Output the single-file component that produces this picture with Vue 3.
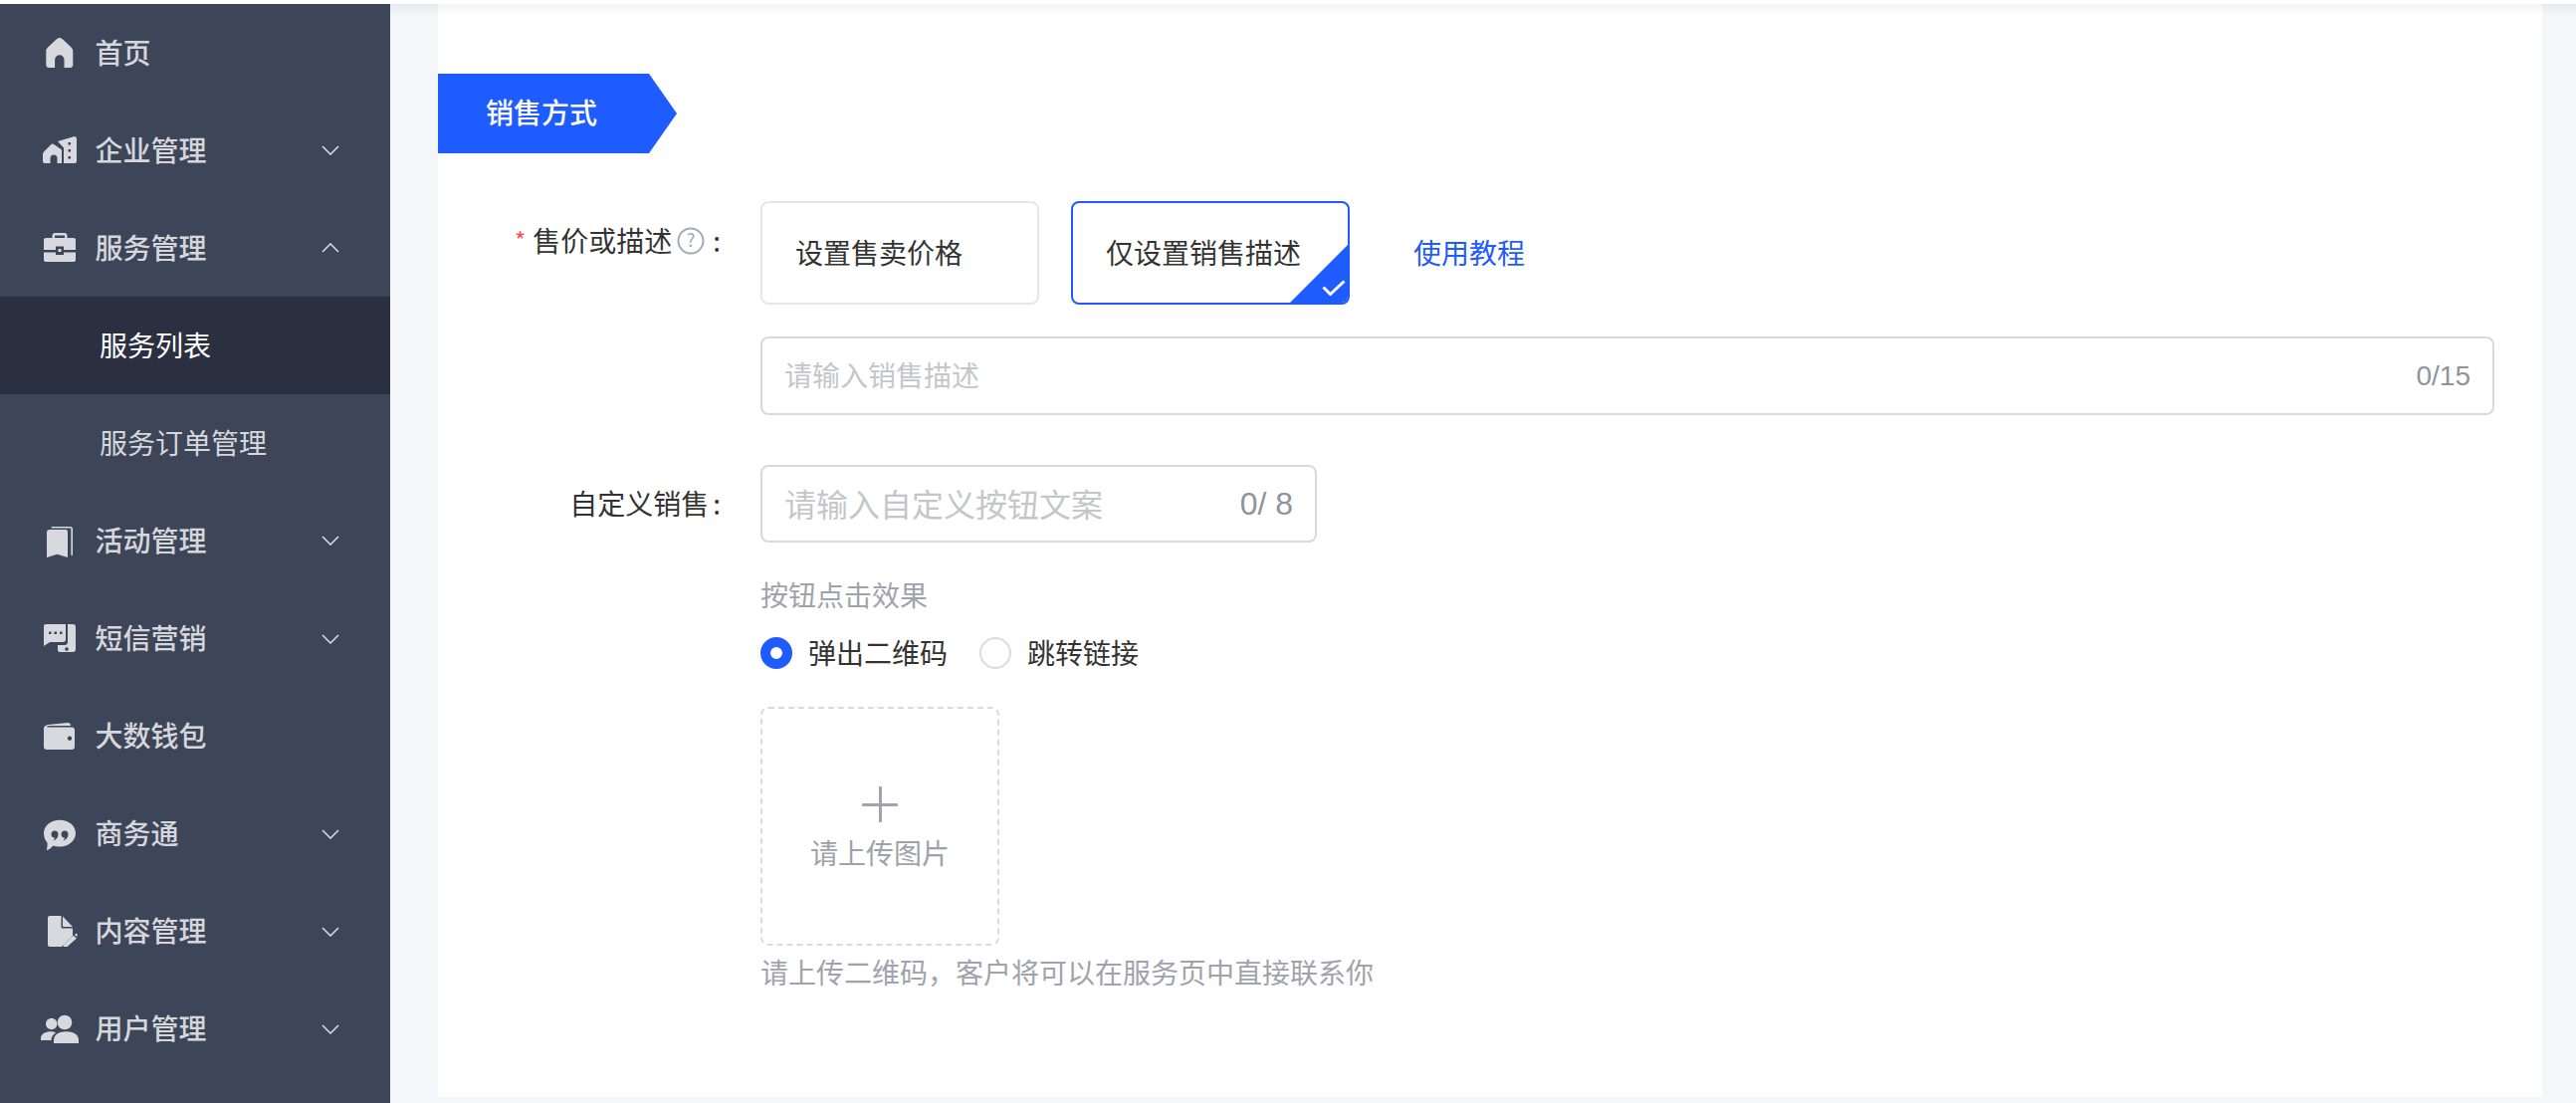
<script setup>
const menu = [
  { label: '首页', icon: 'home' },
  { label: '企业管理', icon: 'building', arrow: 'down' },
  { label: '服务管理', icon: 'case', arrow: 'up' },
  { label: '服务列表', sub: true, active: true },
  { label: '服务订单管理', sub: true },
  { label: '活动管理', icon: 'book', arrow: 'down' },
  { label: '短信营销', icon: 'sms', arrow: 'down' },
  { label: '大数钱包', icon: 'wallet' },
  { label: '商务通', icon: 'chat', arrow: 'down' },
  { label: '内容管理', icon: 'doc', arrow: 'down' },
  { label: '用户管理', icon: 'users', arrow: 'down' }
]
</script>

<template>
  <div class="page">
    <aside class="sidebar">
      <div
        v-for="item in menu"
        :key="item.label"
        class="row"
        :class="{ sub: item.sub, active: item.active }"
      >
        <svg v-if="item.icon" class="icon" viewBox="0 0 40 40">
          <path v-if="item.icon === 'home'" d="M19.800 5C21 5 22 5.700 23 6.500L31.500 14.500C32.700 15.800 33.300 16.800 33.300 18.500V32a3 3 0 0 1-3 3H24.500V27a4.700 4.700 0 0 0-9.400 0V35H9.300a3 3 0 0 1-3-3V18.500C6.300 16.800 6.900 15.800 8.100 14.500L16.600 6.500C17.600 5.700 18.600 5 19.800 5Z" />
          <g v-else-if="item.icon === 'building'">
            <path d="M3 24C3 22 4 21.500 5 20.500L11 14.500a2.500 2.500 0 0 1 3.500-.2L22 19.500V33H17.500V28a3.500 3.500 0 0 0-7 0V33H5a2 2 0 0 1-2-2Z" />
            <path fill-rule="evenodd" d="M18 11L34 6.200a2.200 2.200 0 0 1 3 2V31a2 2 0 0 1-2 2H24V17.500ZM28.500 12v2.500H31V12ZM28.500 19v2.500H31V19ZM28.500 26v2.500H31V26Z" />
          </g>
          <g v-else-if="item.icon === 'case'">
            <path d="M12.500 10V8a3 3 0 0 1 3-3H24.500a3 3 0 0 1 3 3V10H25V7.500H15V10Z" />
            <path d="M6 10H34a2 2 0 0 1 2 2V22H24V18.500H16V22H4V12a2 2 0 0 1 2-2Z" />
            <path d="M4 24.500H16V27H24V24.500H36V32a2 2 0 0 1-2 2H6a2 2 0 0 1-2-2Z" />
            <path d="M18.500 21h3v3h-3z" />
          </g>
          <g v-else-if="item.icon === 'book'">
            <path d="M7 11a3 3 0 0 1 3-3H26a2 2 0 0 1 2 2V36L17.500 32.800L7 36Z" />
            <path class="line" d="M11.700 5.800H30.500a1.700 1.700 0 0 1 1.700 1.700V33.700" />
          </g>
          <g v-else-if="item.icon === 'sms'">
            <path fill-rule="evenodd" d="M4 7a2 2 0 0 1 2-2H26V20a3 3 0 0 1-3 3H10L4 27ZM9 12.500v2.500h2.500v-2.500ZM14.500 12.500v2.500h2.500v-2.500ZM20 12.500v2.500h2.500v-2.500Z" />
            <path fill-rule="evenodd" d="M28 5H33a3 3 0 0 1 3 3V30a3 3 0 0 1-3 3H20a2 2 0 0 1-2-2V26H25a3 3 0 0 0 3-3ZM27 28.200a1.800 1.800 0 1 0 .01 0Z" />
          </g>
          <path v-else-if="item.icon === 'wallet'" fill-rule="evenodd" d="M4 12C4 9.500 5 9 8 8L28 6a3 3 0 0 1 3 3H10C8 9 7 10 7 10.500H32a3 3 0 0 1 3 3V30a3 3 0 0 1-3 3H7a3 3 0 0 1-3-3ZM30 19.500a2.200 2.200 0 1 0 .01 0Z" />
          <path v-else-if="item.icon === 'chat'" fill-rule="evenodd" d="M20 5.700C29 5.700 36 11.300 36 19C36 26.500 29 32.500 20 32.500C17.500 32.500 15.500 32.200 13.500 31.500C11.500 33.800 9.500 35.500 6.700 36C7.500 33.500 7.700 31 7.500 28.500C5.200 26 4 22.500 4 19C4 11.300 11 5.700 20 5.700ZM15 16.500a3.500 3.500 0 0 1 3.500 3.500c0 3-2 5.500-5 6.500c1-1.500 1.500-2.500 1.500-3a3.500 3.500 0 0 1 0-7ZM25 16.500a3.500 3.500 0 0 1 3.500 3.500c0 3-2 5.500-5 6.500c1-1.500 1.500-2.500 1.500-3a3.500 3.500 0 0 1 0-7Z" />
          <g v-else-if="item.icon === 'doc'">
            <path d="M8 6a2 2 0 0 1 2-2H21.500V15a1.500 1.500 0 0 0 1.500 1.500H33V24L22 35H10a2 2 0 0 1-2-2Z" />
            <path d="M23 4.500L33 15H24a1 1 0 0 1-1-1Z" />
            <path d="M24 35L23.500 33.500L33.500 23.800L37 26.500L27.500 35ZM35 23l1.500-1.500L38 23L37 25Z" />
          </g>
          <g v-else-if="item.icon === 'users'">
            <circle cx="25" cy="13" r="7.300" />
            <circle cx="11.700" cy="14.500" r="5.700" />
            <path d="M14 34V31C14 25.500 19 22.200 26.500 22.200C34 22.200 39 25.500 39 31V34Z" />
            <path d="M1 31V29C1 25 5.500 22.300 11 22.300C13 22.300 14.500 22.600 16 23.400C13 25.300 11.500 27.800 11.500 31Z" />
          </g>
        </svg>
        <span class="label">{{ item.label }}</span>
        <svg v-if="item.arrow" class="arrow" :class="{ up: item.arrow === 'up' }" viewBox="0 0 18 10">
          <path d="M1 1L9 9L17 1" />
        </svg>
      </div>
    </aside>

    <main class="main">
      <section class="card">
        <div class="tag">销售方式</div>

        <div class="form-row first">
          <div class="form-label top">
            <span class="star">*</span>
            <span class="form-text">售价或描述</span>
            <svg class="help" viewBox="0 0 28 28">
              <circle cx="14" cy="14" r="12.500" />
              <text x="14" y="20" text-anchor="middle">?</text>
            </svg>
            <span class="colon">:</span>
          </div>
          <div class="form-field">
            <div class="options">
              <div class="option"><span class="nudge">设置售卖价格</span></div>
              <div class="option selected">
                <span class="nudge">仅设置销售描述</span>
                <svg class="check" viewBox="0 0 24 16">
                  <path d="M1.500 7.500L8.500 14.500L22.500 1.500" />
                </svg>
              </div>
              <a class="tutorial nudge">使用教程</a>
            </div>
            <div class="input wide">
              <span class="placeholder nudge">请输入销售描述</span>
              <span class="count">0/15</span>
            </div>
          </div>
        </div>

        <div class="form-row second">
          <div class="form-label">
            <span class="form-text">自定义销售</span>
            <span class="colon narrow">:</span>
          </div>
          <div class="form-field">
            <div class="input short">
              <span class="placeholder nudge">请输入自定义按钮文案</span>
              <span class="count">0/ 8</span>
            </div>
            <div class="effect-title">按钮点击效果</div>
            <div class="radios">
              <div class="radio-item">
                <span class="radio on"></span>
                <span class="nudge">弹出二维码</span>
              </div>
              <div class="radio-item">
                <span class="radio"></span>
                <span class="nudge">跳转链接</span>
              </div>
            </div>
            <div class="upload">
              <span class="plus"></span>
              <span class="upload-text">请上传图片</span>
            </div>
            <div class="hint">请上传二维码，客户将可以在服务页中直接联系你</div>
          </div>
        </div>
      </section>
    </main>
  </div>
</template>

<style scoped>
.page {
  display: flex;
  width: 2588px;
  height: 1108px;
  padding-top: 4px;
  box-sizing: border-box;
  overflow: hidden;
  background: #fff;
  font-family: "Noto Sans CJK SC", "Liberation Sans", sans-serif;
  font-size: 28px;
  color: #333;
}
.sidebar {
  flex: none;
  width: 392px;
  background: #3d4559;
}
.row {
  display: flex;
  align-items: center;
  position: relative;
  height: 98.100px;
  padding-left: 40px;
  color: #d5d7dc;
}
.row .label {
  margin-left: 15.500px;
  margin-bottom: 3px;
  font-weight: 500;
  line-height: 40px;
}
.row.sub {
  padding-left: 100px;
}
.row.sub .label {
  margin-left: 0;
  font-weight: 400;
}
.row.active {
  background: #2b3040;
  color: #fff;
}
.icon {
  flex: none;
  width: 40px;
  height: 40px;
  fill: #d7d9de;
}
.icon .line {
  fill: none;
  stroke: #d7d9de;
  stroke-width: 1.600;
}
.arrow {
  position: absolute;
  left: 323px;
  top: 44px;
  width: 18px;
  height: 10px;
  fill: none;
  stroke: #d7d9de;
  stroke-width: 1.600;
}
.arrow.up {
  transform: rotate(180deg);
}
.main {
  flex: 1;
  position: relative;
  display: flex;
  padding: 0 34px 6px 48px;
  background: #f5f6fa;
}
.main::before {
  content: "";
  position: absolute;
  left: 0;
  right: 0;
  top: 0;
  height: 12px;
  background: linear-gradient(rgba(0, 0, 0, 0.05), rgba(0, 0, 0, 0));
}
.card {
  flex: 1;
  padding-top: 70px;
  background: #fff;
}
.tag {
  width: 240px;
  height: 80px;
  box-sizing: border-box;
  padding-left: 48px;
  line-height: 76px;
  color: #fff;
  font-weight: 500;
  background: #1f5cff;
  clip-path: polygon(0 0, 212px 0, 240px 50%, 212px 100%, 0 100%);
}
.form-row {
  display: flex;
}
.form-row.first {
  margin-top: 48px;
}
.form-row.second {
  margin-top: 50px;
}
.form-label {
  flex: none;
  width: 324px;
  height: 78px;
  padding-right: 40px;
  box-sizing: border-box;
  display: flex;
  align-items: center;
  justify-content: flex-end;
  white-space: nowrap;
}
.form-label.top {
  height: 80px;
}
.form-text {
  margin-bottom: 3px;
}
.star {
  margin-right: 7px;
  margin-bottom: 4px;
  color: #ff4d4f;
  font-size: 24px;
}
.help {
  width: 28px;
  height: 28px;
  margin-left: 5px;
  fill: none;
  stroke: #a4a9b3;
  stroke-width: 2;
}
.help text {
  fill: #a4a9b3;
  stroke: none;
  font-size: 18px;
}
.colon {
  margin-left: 8px;
  margin-bottom: 3px;
}
.colon.narrow {
  margin-left: 4px;
}
.form-field {
  width: 1742px;
}
.options {
  display: flex;
  align-items: center;
  gap: 32px;
}
.option {
  position: relative;
  width: 280px;
  height: 104px;
  padding-left: 33px;
  box-sizing: border-box;
  display: flex;
  align-items: center;
  border: 2px solid #e6e6e6;
  border-radius: 8px;
  overflow: hidden;
}
.nudge {
  margin-bottom: 3px;
}
.option.selected {
  border-color: #1f5cff;
}
.option.selected::after {
  content: "";
  position: absolute;
  right: -2px;
  bottom: -2px;
  width: 62px;
  height: 62px;
  background: #1f5cff;
  clip-path: polygon(100% 0, 100% 100%, 0 100%);
}
.check {
  position: absolute;
  z-index: 1;
  right: 2px;
  bottom: 7px;
  width: 24px;
  height: 16px;
  fill: none;
  stroke: #fff;
  stroke-width: 3;
}
.tutorial {
  margin-left: 32px;
  color: #1f5cff;
}
.input {
  display: flex;
  align-items: center;
  justify-content: space-between;
  box-sizing: border-box;
  padding: 0 22px 0 22px;
  border: 2px solid #d9d9d9;
  border-radius: 8px;
}
.input.wide {
  margin-top: 32px;
  height: 79px;
}
.input.short {
  width: 559px;
  height: 78px;
  font-size: 32px;
}
.placeholder {
  color: #c4c6ca;
}
.count {
  color: #8f939c;
  font-family: "Liberation Sans", sans-serif;
  white-space: pre;
}
.effect-title {
  margin-top: 32px;
  line-height: 40px;
  color: #a0a3ab;
}
.radios {
  display: flex;
  gap: 32px;
  margin-top: 23px;
  height: 32px;
}
.radio-item {
  display: flex;
  align-items: center;
  gap: 16px;
  line-height: 32px;
}
.radio {
  width: 32px;
  height: 32px;
  box-sizing: border-box;
  border: 2px solid #dcdcdc;
  border-radius: 50%;
}
.radio.on {
  border: 10px solid #1f5cff;
}
.upload {
  position: relative;
  margin-top: 38px;
  width: 240px;
  height: 240px;
  box-sizing: border-box;
  border: 2px dashed #d9dbdf;
  border-radius: 8px;
  display: flex;
  flex-direction: column;
  align-items: center;
  padding-top: 78px;
}
.plus {
  position: relative;
  width: 36px;
  height: 36px;
  background:
    linear-gradient(#a0a4ac, #a0a4ac) center / 36px 3px no-repeat,
    linear-gradient(#a0a4ac, #a0a4ac) center / 3px 36px no-repeat;
}
.upload-text {
  margin-top: 10px;
  line-height: 40px;
  color: #9ea2aa;
}
.hint {
  margin-top: 6px;
  line-height: 40px;
  color: #a0a3ab;
}
</style>

<style>
html, body {
  margin: 0;
  background: #fff;
}
</style>
